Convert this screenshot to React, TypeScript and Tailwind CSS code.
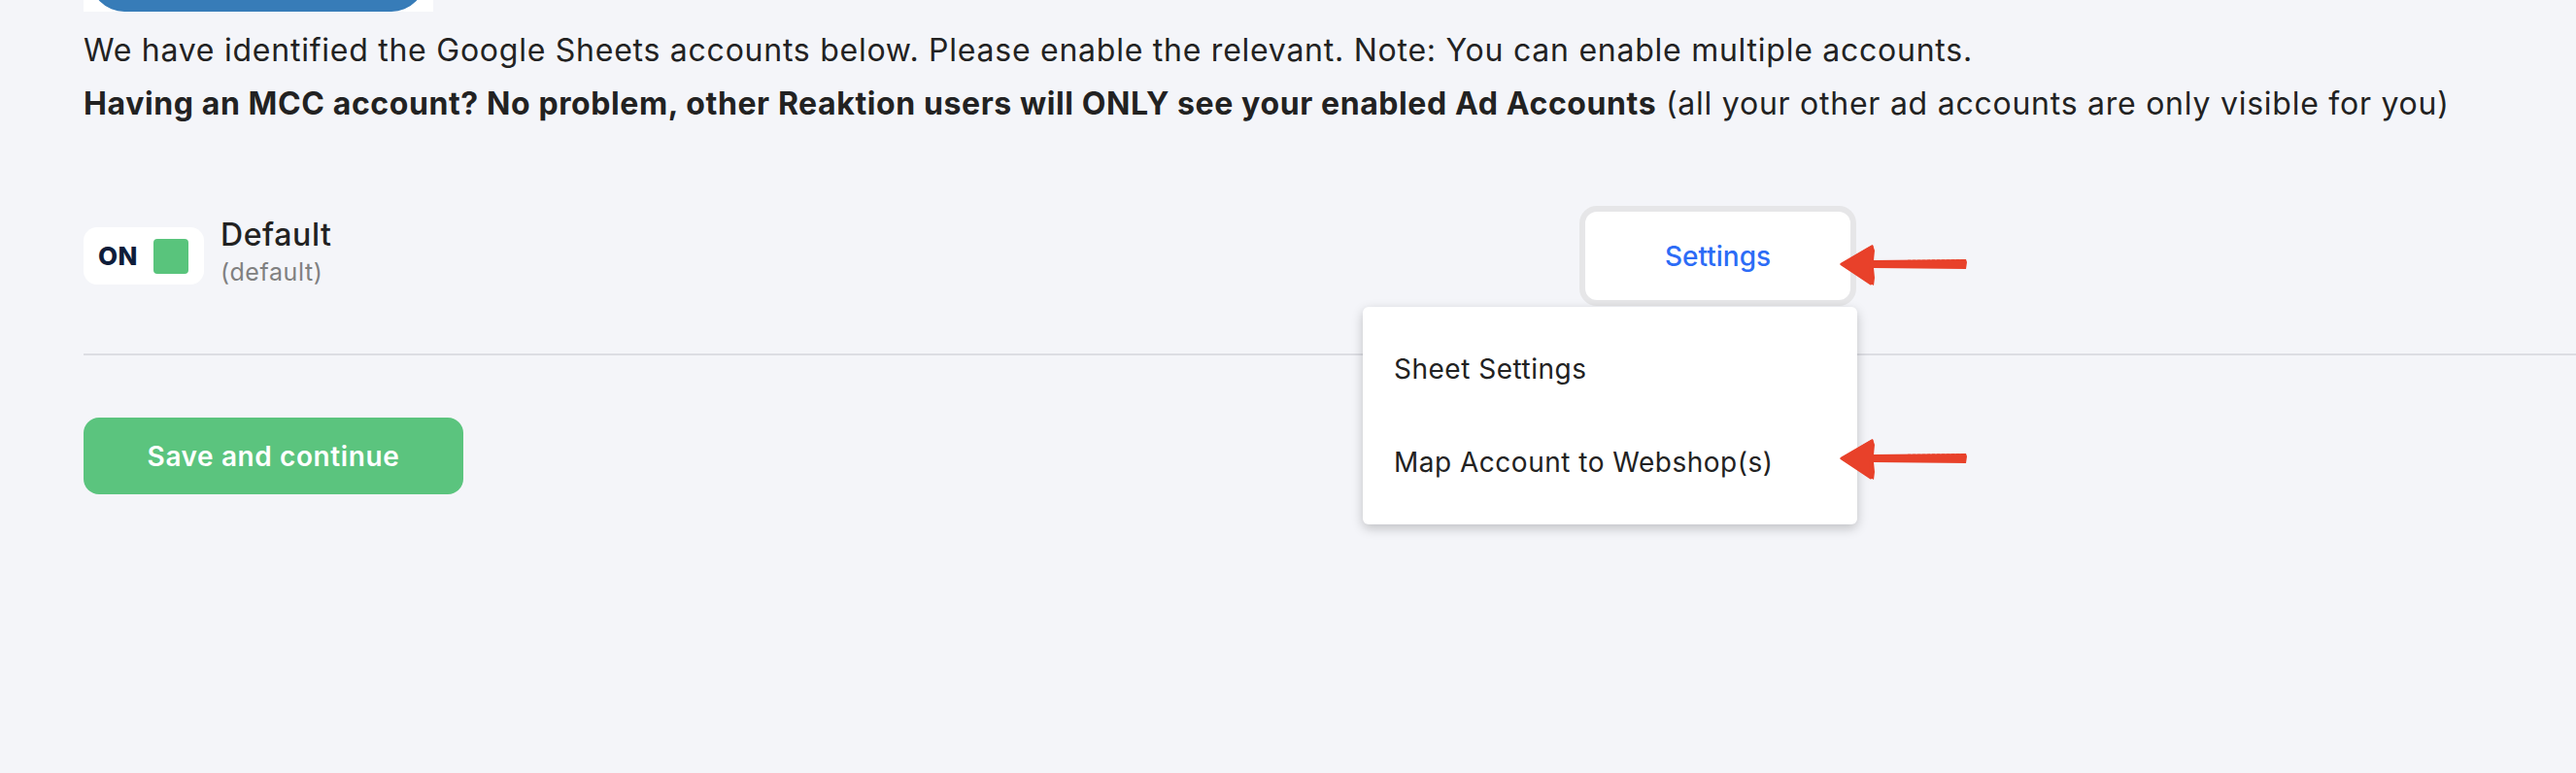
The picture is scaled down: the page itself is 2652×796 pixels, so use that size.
import React from 'react';

function HandArrow({ className }: { className?: string }) {
  return (
    <svg className={className} width="134" height="46" viewBox="0 0 134 46" fill="none">
      <path
        d="M1 21 L35 1 L37 7 L36 17 L131 16 L132 19 L131 26 L36 25 L37 35 L36 43 Z"
        fill="#e8412a"
      />
      <path d="M36 18 L128 17 M36 24 L129 24" stroke="#e8412a" strokeWidth="1.5" strokeDasharray="3 2" />
      <path d="M3 21 L34 3 L33 41 Z" stroke="#e8412a" strokeWidth="3" strokeLinejoin="round" />
    </svg>
  );
}

function Toggle() {
  return (
    <div className="flex h-[59px] w-[124px] items-center rounded-[14px] bg-white pl-[15px] pr-[16px]">
      <span className="text-[26px] font-extrabold leading-none tracking-[0.5px] text-[#0f1d3a]">ON</span>
      <span className="ml-auto h-[36px] w-[36px] rounded-[4px] bg-[#59c47c]" />
    </div>
  );
}

function SettingsMenu() {
  return (
    <div className="relative">
      <button className="flex h-[103px] w-[285px] items-center justify-center rounded-[18px] border-[6px] border-[#e6e6e8] bg-white text-[28px] font-medium text-[#2c6cf6]">
        Settings
      </button>
      <HandArrow className="absolute left-[267px] top-[39px]" />

      <div className="absolute right-[-1px] top-full mt-[1px] w-[509px] rounded-[6px] bg-white shadow-[0_4px_12px_rgba(0,0,0,0.22)]">
        <div className="flex h-[224px] flex-col justify-center gap-[68px] pl-[32px] text-[28px] leading-none tracking-[0.5px] text-[#222]">
          <span>Sheet Settings</span>
          <span>Map Account to Webshop(s)</span>
        </div>
        <HandArrow className="absolute left-[490px] top-[135px]" />
      </div>
    </div>
  );
}

export default function App() {
  return (
    <div className="h-[796px] w-full overflow-hidden bg-[#f4f5f9] font-['Inter',sans-serif] text-[#222]">
      {/* header pill remnant */}
      <div className="ml-[86px] h-[12px] w-[360px] overflow-hidden bg-white px-[7px]">
        <div className="-mt-[58px] h-[70px] w-[345px] rounded-[35px] bg-[#377cb8]" />
      </div>

      {/* intro text */}
      <div className="mt-[12px] pl-[86px] text-[32px] leading-[55px] tracking-[0.75px]">
        <p>We have identified the Google Sheets accounts below. Please enable the relevant. Note: You can enable multiple accounts.</p>
        <p>
          <span className="font-bold tracking-[0.6px]">
            Having an MCC account? No problem, other Reaktion users will ONLY see your enabled Ad Accounts
          </span>{' '}
          (all your other ad accounts are only visible for you)
        </p>
      </div>

      {/* account row */}
      <div className="ml-[86px] mt-[78px] flex w-[1825px] items-start justify-between">
        <div className="mt-[22px] flex items-start gap-[17px]">
          <Toggle />
          <div className="-mt-[14px] flex flex-col">
            <span className="text-[32px] font-medium leading-[44px] tracking-[0.6px]">Default</span>
            <span className="text-[25px] leading-[32px] tracking-[0.6px] text-[#808080]">(default)</span>
          </div>
        </div>
        <SettingsMenu />
      </div>

      <div className="ml-[86px] mt-[49px] h-[2px] bg-[#dcdde3]" />

      <button className="ml-[86px] mt-[64px] flex h-[79px] w-[391px] items-center justify-center rounded-[16px] bg-[#5bc47e] text-[28px] font-semibold tracking-[0.6px] text-white">
        Save and continue
      </button>
    </div>
  );
}
